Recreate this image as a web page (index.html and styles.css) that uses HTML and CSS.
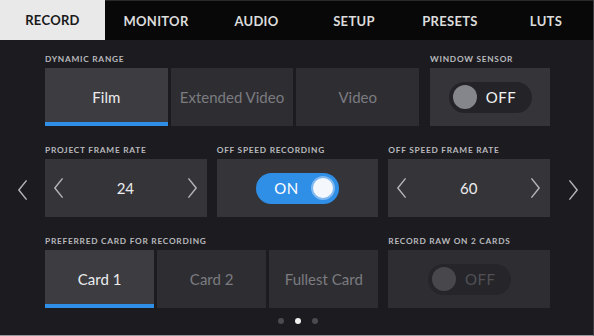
FILE: index.html
```html
<!DOCTYPE html>
<html>
<head>
<meta charset="utf-8">
<link rel="stylesheet" href="styles.css">
</head>
<body>
<div class="screen">
  <nav class="tabs">
    <div class="tab active">RECORD</div>
    <div class="tab">MONITOR</div>
    <div class="tab">AUDIO</div>
    <div class="tab">SETUP</div>
    <div class="tab">PRESETS</div>
    <div class="tab">LUTS</div>
  </nav>
  <main class="body">
    <div class="side side-left">
      <svg class="chev" viewBox="0 0 12 22"><polyline points="10,1 2,11 10,21"/></svg>
    </div>
    <div class="content">
      <div class="row row-first">
        <div class="field field-dr">
          <div class="label">DYNAMIC RANGE</div>
          <div class="seg">
            <div class="cell sel">Film</div>
            <div class="cell">Extended Video</div>
            <div class="cell">Video</div>
          </div>
        </div>
        <div class="field field-ws">
          <div class="label">WINDOW SENSOR</div>
          <div class="cell box">
            <div class="toggle off"><span class="knob"></span><span class="ttext">OFF</span></div>
          </div>
        </div>
      </div>
      <div class="row">
        <div class="field col">
          <div class="label">PROJECT FRAME RATE</div>
          <div class="cell box stepper">
            <svg class="chev" viewBox="0 0 12 22"><polyline points="10,1 2,11 10,21"/></svg>
            <span class="val">24</span>
            <svg class="chev" viewBox="0 0 12 22"><polyline points="2,1 10,11 2,21"/></svg>
          </div>
        </div>
        <div class="field col">
          <div class="label">OFF SPEED RECORDING</div>
          <div class="cell box">
            <div class="toggle on"><span class="ttext">ON</span><span class="knob"></span></div>
          </div>
        </div>
        <div class="field col">
          <div class="label">OFF SPEED FRAME RATE</div>
          <div class="cell box stepper">
            <svg class="chev" viewBox="0 0 12 22"><polyline points="10,1 2,11 10,21"/></svg>
            <span class="val">60</span>
            <svg class="chev" viewBox="0 0 12 22"><polyline points="2,1 10,11 2,21"/></svg>
          </div>
        </div>
      </div>
      <div class="row">
        <div class="field col2">
          <div class="label">PREFERRED CARD FOR RECORDING</div>
          <div class="seg">
            <div class="cell sel">Card 1</div>
            <div class="cell">Card 2</div>
            <div class="cell">Fullest Card</div>
          </div>
        </div>
        <div class="field col">
          <div class="label">RECORD RAW ON 2 CARDS</div>
          <div class="cell box">
            <div class="toggle disabled"><span class="knob"></span><span class="ttext">OFF</span></div>
          </div>
        </div>
      </div>
      <div class="dots">
        <span class="dot"></span><span class="dot cur"></span><span class="dot"></span>
      </div>
    </div>
    <div class="side side-right">
      <svg class="chev" viewBox="0 0 12 22"><polyline points="2,1 10,11 2,21"/></svg>
    </div>
  </main>
</div>
</body>
</html>
```

FILE: styles.css
```css
* { box-sizing: border-box; }
html, body { margin: 0; padding: 0; background: #1c1c20; }
body { font-family: Lato, "Noto Sans", sans-serif; }
.screen {
  width: 594px; height: 336px; background: #1c1c20; overflow: hidden;
  border-right: 1px solid #3c3c40; border-bottom: 1px solid #9a9a9e;
}

.tabs {
  display: grid;
  grid-template-columns: 105px 102px 99px 96px 96px 96px;
  height: 40px;
  background: #080808;
  border-top: 1px solid #2a2a2a;
}
.tab {
  display: flex; align-items: center; justify-content: center;
  color: #dcdcdc; font-size: 13px; font-weight: 700; letter-spacing: 0.3px;
}
.tab.active { background: #e9e9ea; color: #1a1a1a; margin-top: -1px; }

.body { display: flex; height: 295px; }
.side { width: 45px; display: flex; align-items: center; justify-content: center; padding-top: 4px; }
.side-left { justify-content: flex-end; padding-right: 17px; }
.side-right { width: 43px; justify-content: flex-start; padding-left: 18px; }
.chev { width: 11px; height: 22px; fill: none; stroke: #b4b4b8; stroke-width: 1.6; stroke-linecap: round; stroke-linejoin: round; }

.content { width: 505px; display: flex; flex-direction: column; gap: 19px; padding-top: 14px; }
.row { display: flex; gap: 10px; }
.row-first { gap: 11px; }
.field { display: flex; flex-direction: column; gap: 4px; }
.field-dr { width: 374px; }
.field-ws { width: 120px; }
.col { width: 162px; }
.col2 { width: 334px; }
.label {
  height: 10px; line-height: 10px;
  font-size: 8.3px; font-weight: 700; letter-spacing: 0.75px;
  color: #b9b9bd; white-space: nowrap;
}
.seg { display: flex; gap: 3px; }
.seg .cell { flex: 1; }
.cell {
  height: 58px; background: #2e2e32;
  display: flex; align-items: center; justify-content: center;
  font-size: 15px; color: #7b7b80;
}
.cell.sel { background: #3d3d41; color: #ececee; box-shadow: inset 0 -4px 0 #2f8ee6; }
.box { background: #2e2e32; }
.field-ws .box, .row:nth-child(2) .box { background: #353539; }

.stepper { justify-content: space-between; padding: 0 9px 0 8px; color: #ececee; }
.stepper .val { font-size: 15px; }

.toggle {
  width: 83px; height: 31px; border-radius: 16px;
  display: flex; align-items: center; padding: 0 4px;
  font-size: 15px; letter-spacing: 0.5px;
}
.toggle .knob { width: 24px; height: 24px; border-radius: 50%; flex: none; }
.toggle .ttext { flex: 1; text-align: center; padding-right: 2px; }
.toggle.off { background: #242428; color: #f2f2f2; }
.toggle.off .knob { background: #85858c; }
.toggle.on { background: #2f8ee6; color: #ffffff; }
.toggle.on .ttext { padding-right: 0; padding-left: 2px; }
.toggle.on .knob { background: #f4f8fc; border: 2px solid #7fb8f0; }
.toggle.disabled { background: #26262a; color: #505055; }
.toggle.disabled .knob { background: #48484c; }

.dots { display: flex; justify-content: center; gap: 11px; margin-top: -9px; }
.dot { width: 6px; height: 6px; border-radius: 50%; background: #4a4a4f; }
.dot.cur { background: #f0f0f0; }
```
